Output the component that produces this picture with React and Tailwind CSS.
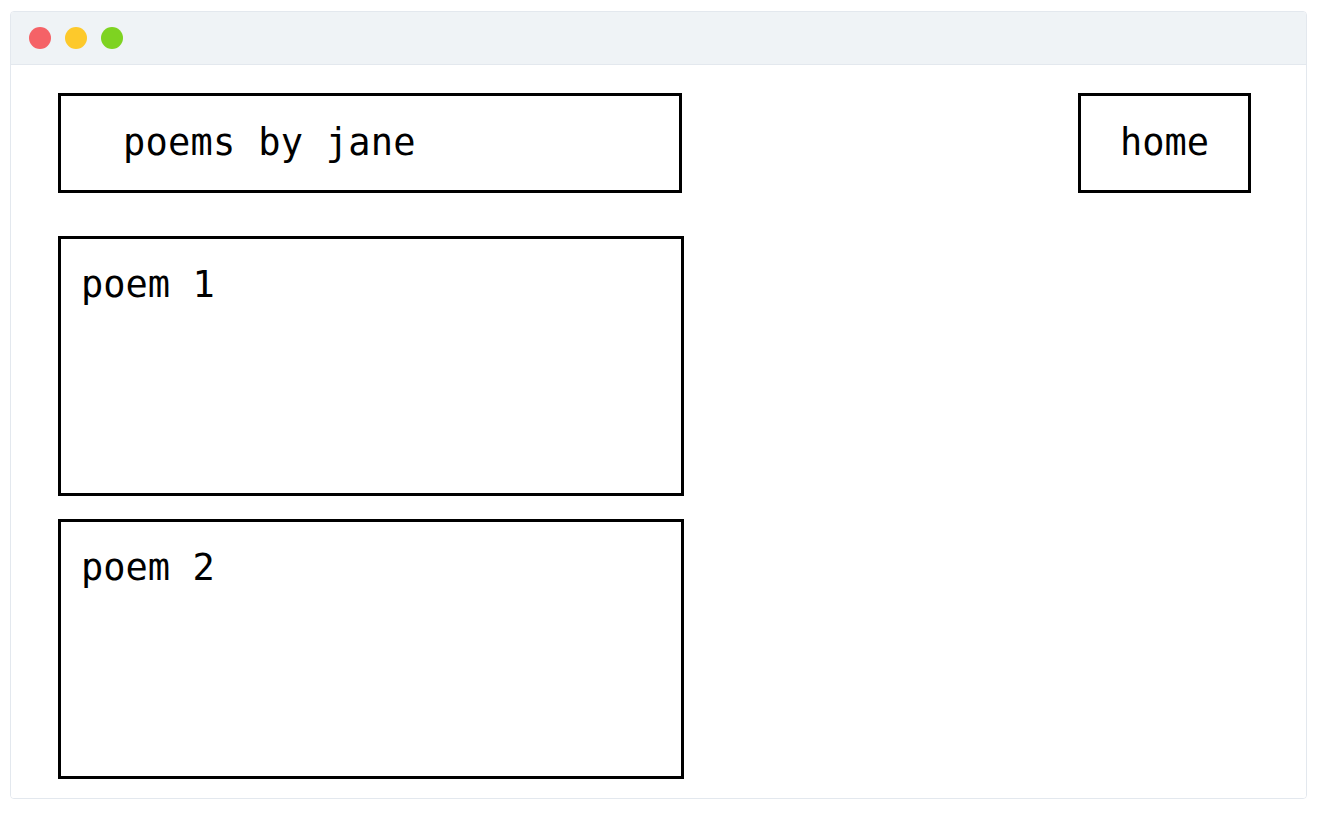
export default function App() {
  const mono = { fontFamily: '"DejaVu Sans Mono", "Liberation Mono", monospace' };
  return (
    <div className="w-[1319px] h-[818px] bg-white pt-[11px] pl-[10px]">
      <div className="w-[1297px] h-[788px] rounded-[4px] border border-[#e3e8ee] overflow-hidden flex flex-col">
        <div className="h-[53px] shrink-0 bg-[#eff3f6] border-b border-[#e3e8ee] flex items-center gap-[14px] pl-[18px]">
          <span className="w-[22px] h-[22px] rounded-full bg-[#f56267]" />
          <span className="w-[22px] h-[22px] rounded-full bg-[#fdc92b]" />
          <span className="w-[22px] h-[22px] rounded-full bg-[#7ed321]" />
        </div>
        <div className="flex-1 bg-white pt-[28px] pl-[47px] pr-[55px] text-black" style={mono}>
          <div className="flex justify-between">
            <div className="w-[624px] h-[100px] border-[3px] border-black flex items-center pl-[62px] pb-[1px] text-[37px] tracking-[0.25px]">
              poems by jane
            </div>
            <div className="w-[173px] h-[100px] border-[3px] border-black flex items-center justify-center pb-[1px] text-[37px]">
              home
            </div>
          </div>
          <div className="mt-[43px] flex flex-col gap-[23px]">
            <div className="w-[626px] h-[260px] border-[3px] border-black pl-[20px] pt-[27px] text-[37px] leading-none">
              poem 1
            </div>
            <div className="w-[626px] h-[260px] border-[3px] border-black pl-[20px] pt-[27px] text-[37px] leading-none">
              poem 2
            </div>
          </div>
        </div>
      </div>
    </div>
  );
}
